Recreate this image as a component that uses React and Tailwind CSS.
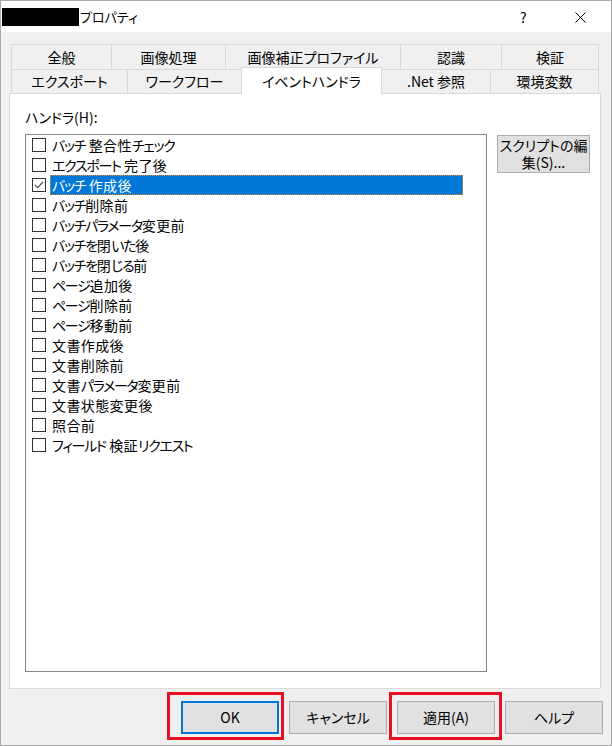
import React from 'react';

const font = "font-['Noto_Sans_CJK_JP','Noto_Sans',sans-serif] [font-feature-settings:'palt']";

const handlers = [
  'バッチ 整合性チェック',
  'エクスポート 完了後',
  'バッチ 作成後',
  'バッチ削除前',
  'バッチパラメータ変更前',
  'バッチを閉いた後',
  'バッチを閉じる前',
  'ページ追加後',
  'ページ削除前',
  'ページ移動前',
  '文書作成後',
  '文書削除前',
  '文書パラメータ変更前',
  '文書状態変更後',
  '照合前',
  'フィールド 検証リクエスト',
];

// kana in the original UI font is narrower than the kanji, so squeeze kana runs a bit
function Label({ text }) {
  const parts = text.split(/([\u30a0-\u30ff\u3040-\u309f]+)/);
  return parts.map((p, i) =>
    /[\u30a0-\u30ff\u3040-\u309f]/.test(p) ? (
      <span key={i} className="tracking-[-1.3px]">{p}</span>
    ) : (
      <span key={i} className="tracking-[0.4px]">{p}</span>
    )
  );
}

function Check({ checked }) {
  return (
    <div className="w-[14px] h-[14px] border border-[#333333] bg-white flex items-center justify-center shrink-0">
      {checked && (
        <svg width="12" height="12" viewBox="0 0 12 12">
          <path d="M2 6 L4.7 8.7 L10 3" fill="none" stroke="#555555" strokeWidth="1.2" />
        </svg>
      )}
    </div>
  );
}

function Tab({ w, children, noRight }) {
  return (
    <div
      className={`h-full flex items-center justify-center border-[#d9d9d9] ${noRight ? '' : 'border-r'} ${w}`}
    >
      {children}
    </div>
  );
}

export default function App() {
  return (
    <div className={`w-[612px] h-[746px] flex flex-col bg-[#f0f0f0] border border-[#aaaaaa] text-black ${font}`}>
      {/* title bar */}
      <div className="h-[31px] bg-white flex items-center relative shrink-0">
        <div className="ml-[1px] w-[77px] h-[18px] bg-black" />
        <span className="ml-[1px] text-[13px]">プロパティ</span>
        <span className="absolute left-[519px] top-[6px] text-[14px]">?</span>
        <svg className="absolute left-[574px] top-[11px]" width="11" height="11" viewBox="0 0 11 11">
          <path d="M0.5 0.5 L10.5 10.5 M10.5 0.5 L0.5 10.5" stroke="#000" strokeWidth="1" />
        </svg>
      </div>

      {/* tabs + panel */}
      <div className="pt-[12px] pl-[8px] text-[14px]">
        <div className="ml-[2px] w-[588px] h-[26px] flex border-t border-l border-b border-[#d9d9d9]">
          <Tab w="w-[100px]">全般</Tab>
          <Tab w="w-[114px]">画像処理</Tab>
          <Tab w="w-[175px]">画像補正プロファイル</Tab>
          <Tab w="w-[101px]">認識</Tab>
          <Tab w="w-[97px]">検証</Tab>
        </div>
        <div className="ml-[2px] w-[588px] h-[23px] flex border-l border-[#d9d9d9]">
          <Tab w="w-[116px]">エクスポート</Tab>
          <Tab w="w-[113px]" noRight>ワークフロー</Tab>
          <div className="relative z-10 -mt-[3px] h-[27px] w-[141px] bg-white border-l border-t border-r border-[#d9d9d9] flex items-center justify-center">
            イベントハンドラ
          </div>
          <Tab w="w-[109px]">.Net 参照</Tab>
          <Tab w="w-[108px]">環境変数</Tab>
        </div>

        <div className="w-[592px] h-[596px] bg-white border border-[#d9d9d9] pl-[15px] pt-[13px]">
          <div className="h-[20px] leading-[20px]">ハンドラ(H):</div>
          <div className="mt-[7px] flex items-start">
            <div className="w-[462px] h-[538px] border border-[#828790] pl-[6px]">
              {handlers.map((h, i) => (
                <div key={h} className="h-[20px] flex items-center">
                  <Check checked={i === 2} />
                  <div
                    className={`ml-[4px] h-[20px] leading-[18px] px-[1px] whitespace-nowrap ${
                      i === 2
                        ? 'w-[413px] bg-[#0078d7] text-white border border-dotted border-[#f08a24]'
                        : 'border border-transparent'
                    }`}
                  >
                    <Label text={h} />
                  </div>
                </div>
              ))}
            </div>
            <button className="ml-[10px] mt-[1px] w-[93px] h-[38px] bg-[#e1e1e1] border border-[#adadad] text-[14px] leading-[17px] text-center">
              スクリプトの編<br />集(S)...
            </button>
          </div>
        </div>
      </div>

      {/* buttons */}
      <div className="relative flex justify-end gap-[10px] pr-[8px] pt-[12px] text-[14px]">
        <button className="w-[98px] h-[33px] bg-[#e1e1e1] border-2 border-[#0078d7]">OK</button>
        <button className="w-[98px] h-[33px] bg-[#e1e1e1] border border-[#adadad]">キャンセル</button>
        <button className="w-[98px] h-[33px] bg-[#e1e1e1] border border-[#adadad]">適用(A)</button>
        <button className="w-[98px] h-[33px] bg-[#e1e1e1] border border-[#adadad]">ヘルプ</button>
        <div className="absolute left-[166px] top-[3px] w-[117px] h-[48px] border-[3px] border-[#e81123] pointer-events-none" />
        <div className="absolute left-[388px] top-[3px] w-[113px] h-[48px] border-[3px] border-[#e81123] pointer-events-none" />
      </div>
    </div>
  );
}
